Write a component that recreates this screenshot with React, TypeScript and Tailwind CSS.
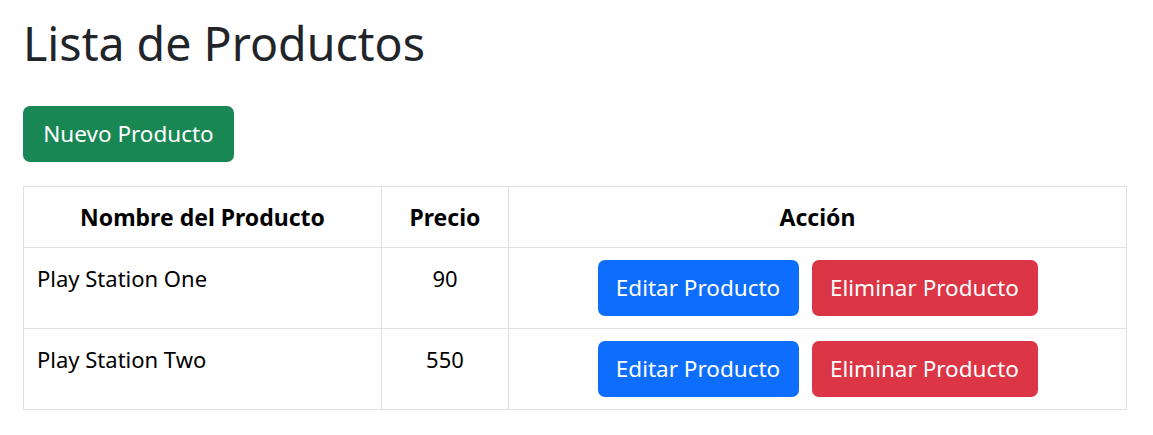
const PRODUCTS = [
  { name: "Play Station One", price: 90 },
  { name: "Play Station Two", price: 550 },
];

const BTN =
  "flex h-[56px] items-center justify-center whitespace-nowrap rounded-[7px] text-[22.5px] leading-none text-white";

export default function App() {
  return (
    <div className="min-h-screen bg-white px-[23px] pt-[11px] font-['Noto_Sans',sans-serif]">
      <h1 className="text-[46.5px] leading-[64px] font-normal text-[#212529]">Lista de Productos</h1>

      <button type="button" className={`${BTN} mt-[31px] w-[211px] bg-[#198754]`}>
        Nuevo Producto
      </button>

      <table className="mt-[24px] w-[1104px] table-fixed border-collapse text-[22px] text-black">
        <colgroup>
          <col className="w-[358px]" />
          <col className="w-[127px]" />
          <col />
        </colgroup>
        <thead>
          <tr className="h-[61px] text-[23px]">
            <th className="border border-[#dee2e6] font-bold">Nombre del Producto</th>
            <th className="border border-[#dee2e6] font-bold">Precio</th>
            <th className="border border-[#dee2e6] font-bold">Acción</th>
          </tr>
        </thead>
        <tbody>
          {PRODUCTS.map((p) => (
            <tr key={p.name} className="h-[81px]">
              <td className="border border-[#dee2e6] px-[13px] pt-[14px] align-top">{p.name}</td>
              <td className="border border-[#dee2e6] pt-[14px] text-center align-top">{p.price}</td>
              <td className="border border-[#dee2e6] py-[12px]">
                <div className="flex justify-center gap-[13px]">
                  <button type="button" className={`${BTN} w-[201px] bg-[#0d6efd]`}>
                    Editar Producto
                  </button>
                  <button type="button" className={`${BTN} w-[226px] bg-[#dc3545]`}>
                    Eliminar Producto
                  </button>
                </div>
              </td>
            </tr>
          ))}
        </tbody>
      </table>
    </div>
  );
}
